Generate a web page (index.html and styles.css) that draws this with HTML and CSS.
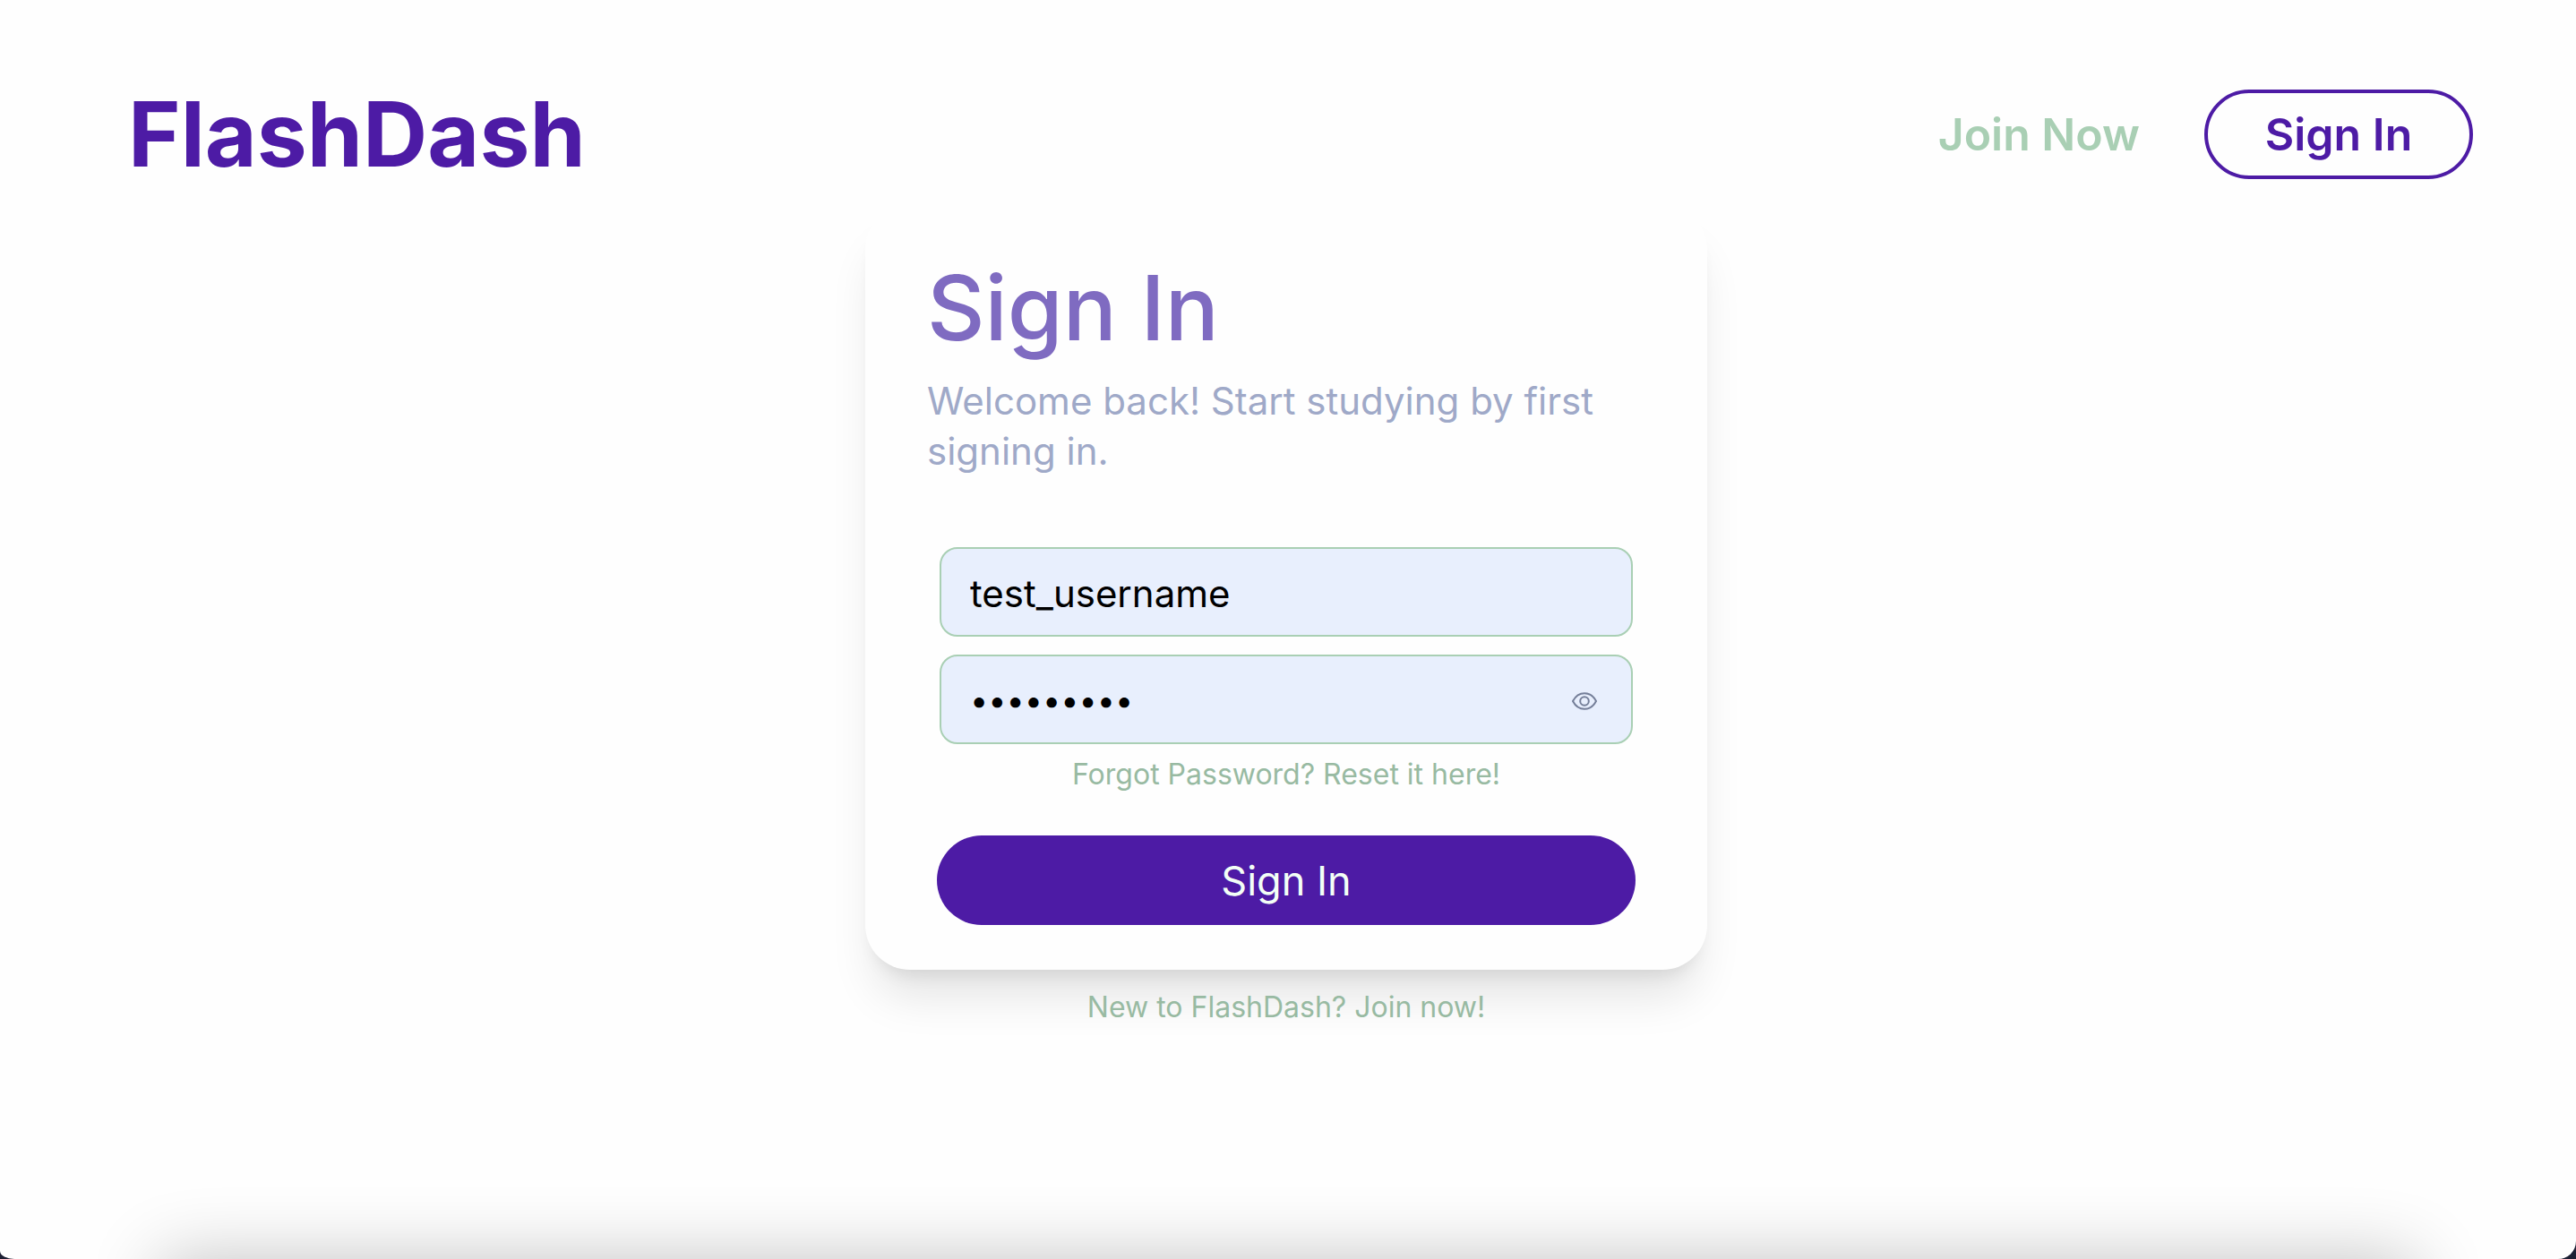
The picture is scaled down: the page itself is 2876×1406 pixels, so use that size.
FILE: index.html
```html
<!DOCTYPE html>
<html lang="en">
<head>
<meta charset="utf-8">
<title>FlashDash</title>
<link rel="stylesheet" href="styles.css">
</head>
<body>
<div class="page">
  <header class="header">
    <a class="logo" href="#">FlashDash</a>
    <nav class="nav">
      <a class="nav-join" href="#">Join Now</a>
      <button class="nav-signin" type="button">Sign In</button>
    </nav>
  </header>
  <main class="main">
    <section class="card">
      <h1 class="title">Sign In</h1>
      <p class="intro">Welcome back! Start studying by first signing in.</p>
      <form class="form">
        <div class="fields">
          <input class="input" type="text" aria-label="Username" value="test_username">
          <div class="password">
            <input class="input input-password" type="password" aria-label="Password" value="flashdash">
            <button class="reveal" type="button" aria-label="Show password">
              <svg class="eye" viewBox="0 0 28 20" fill="none" stroke="currentColor" stroke-width="2">
                <path d="M1 10C4 4.300 8.500 1.200 14 1.200S24 4.300 27 10C24 15.700 19.500 18.800 14 18.800S4 15.700 1 10Z"/>
                <circle cx="14" cy="10" r="4.800"/>
              </svg>
            </button>
          </div>
        </div>
        <a class="link" href="#">Forgot Password? Reset it here!</a>
        <button class="submit" type="submit">Sign In</button>
      </form>
    </section>
    <a class="link link-join" href="#">New to FlashDash? Join now!</a>
  </main>
  <footer class="footer"></footer>
</div>
</body>
</html>
```
FILE: styles.css
```css
* {
  box-sizing: border-box;
}

html {
  background: #1c1f33;
}

body {
  margin: 0;
  font-family: Inter, "Liberation Sans", sans-serif;
}

a {
  text-decoration: none;
}

button,
input {
  margin: 0;
  font-family: inherit;
}

.page {
  display: flex;
  flex-direction: column;
  height: 100vh;
  padding-right: 4px;
  overflow: hidden;
  background: #fefefe;
  border-radius: 0 0 20px 16px / 0 0 20px 9px;
}

.header {
  display: flex;
  align-items: center;
  justify-content: space-between;
  padding: 100px 111px 28px 143px;
}

.logo {
  color: #4d1ba5;
  font-size: 100px;
  font-weight: 700;
  line-height: 100px;
}

.nav {
  display: flex;
  align-items: center;
  gap: 72px;
  font-size: 50px;
  font-weight: 600;
}

.nav-join {
  color: #a9cfb4;
}

.nav-signin {
  width: 300px;
  height: 100px;
  padding: 0;
  border: 4px solid #4d1ba5;
  border-radius: 50px;
  background: transparent;
  color: #4d1ba5;
  font-size: 50px;
  font-weight: 600;
}

.main {
  display: flex;
  flex: 1;
  flex-direction: column;
  align-items: center;
}

.card {
  width: 940px;
  max-width: 100%;
  padding: 56px 69px 50px;
  border-radius: 50px;
  background: #fefefe;
  box-shadow: 0 40px 50px -10px rgba(0, 0, 0, 0.1), 0 16px 20px -12px rgba(0, 0, 0, 0.1);
}

.title {
  margin: 0 0 16px;
  color: #7f6bc1;
  font-size: 100px;
  font-weight: 500;
  line-height: 120px;
}

.intro {
  margin: 0 0 79px;
  color: #9fa9c8;
  font-size: 42px;
  line-height: 56px;
}

.form {
  display: flex;
  flex-direction: column;
  align-items: center;
  padding: 0 11px;
}

.fields {
  display: flex;
  flex-direction: column;
  gap: 20px;
  width: 100%;
  margin-bottom: 10px;
  padding: 0 3px;
}

.input {
  display: block;
  width: 100%;
  height: 100px;
  padding: 2px 32px 0;
  border: 2px solid #a9cfb4;
  border-radius: 20px;
  outline: none;
  background: #e8effd;
  color: #000;
  font-size: 42px;
}

.input-password {
  padding-right: 90px;
  font-size: 36px;
}

.password {
  position: relative;
}

.reveal {
  position: absolute;
  top: 32px;
  right: 34px;
  display: flex;
  align-items: center;
  justify-content: center;
  width: 40px;
  height: 40px;
  padding: 0;
  border: 0;
  background: transparent;
  color: #757f99;
}

.eye {
  width: 28px;
  height: 20px;
}

.link {
  color: #98baa2;
  font-size: 32px;
  line-height: 48px;
}

.submit {
  width: 100%;
  height: 100px;
  margin-top: 44px;
  padding: 0;
  border: 0;
  border-radius: 50px;
  background: #4d1ba5;
  color: #f3fff6;
  font-size: 45px;
  font-weight: 400;
}

.link-join {
  margin-top: 18px;
}

.footer {
  flex: none;
  height: 200px;
  margin: 0 175px -200px 179px;
  box-shadow: 0 0 80px rgba(0, 0, 0, 0.24);
}
```
